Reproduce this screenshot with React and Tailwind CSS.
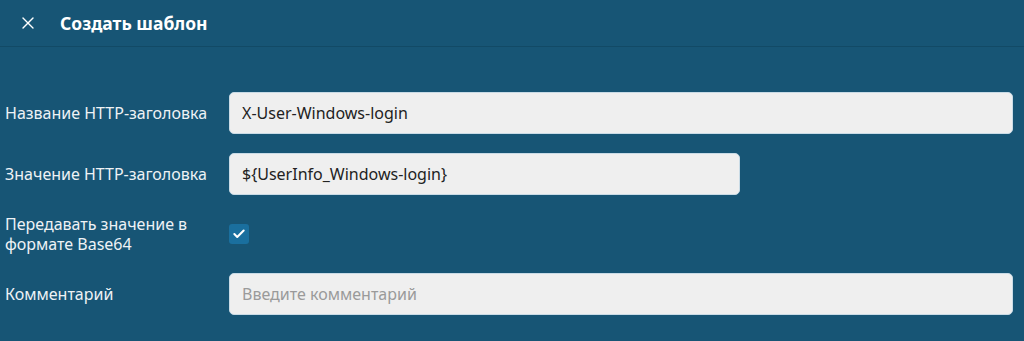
import React from 'react';
import { X, Check } from 'lucide-react';

const Row = ({ label, children }) => (
  <div className="flex items-center">
    <div className="w-[229px] shrink-0 pl-[5px] pr-4 text-[16px] leading-[20px] text-[#eef2f5]">{label}</div>
    {children}
  </div>
);

const Field = ({ value, placeholder, className = '' }) => (
  <input
    readOnly
    value={value}
    placeholder={placeholder}
    className={`h-[42px] rounded-[5px] border border-[#c9dbe6] bg-[#efefef] px-3 text-[16px] text-[#222] placeholder:text-[#9a9a9a] outline-none ${className}`}
  />
);

export default function App() {
  return (
    <div className="h-[341px] w-[1024px] overflow-hidden bg-[#175575] font-['Noto_Sans',sans-serif]">
      <div className="flex h-[47px] items-center gap-[22px] border-b border-[#124a66] pl-[18px]">
        <X size={20} strokeWidth={1.6} className="text-white" />
        <span className="text-[17.5px] font-bold text-white">Создать шаблон</span>
      </div>
      <div className="flex flex-col gap-[19px] pt-[45px]">
        <Row label="Название HTTP-заголовка">
          <Field value="X-User-Windows-login" className="w-[784px]" />
        </Row>
        <Row label="Значение HTTP-заголовка">
          <Field value="${UserInfo_Windows-login}" className="w-[511px]" />
        </Row>
        <Row label="Передавать значение в формате Base64">
          <div className="flex h-[20px] w-[20px] items-center justify-center rounded-[3px] bg-[#1a6f9e]">
            <Check size={14} strokeWidth={3.5} className="text-white" />
          </div>
        </Row>
        <Row label="Комментарий">
          <Field value="" placeholder="Введите комментарий" className="w-[784px]" />
        </Row>
      </div>
    </div>
  );
}
